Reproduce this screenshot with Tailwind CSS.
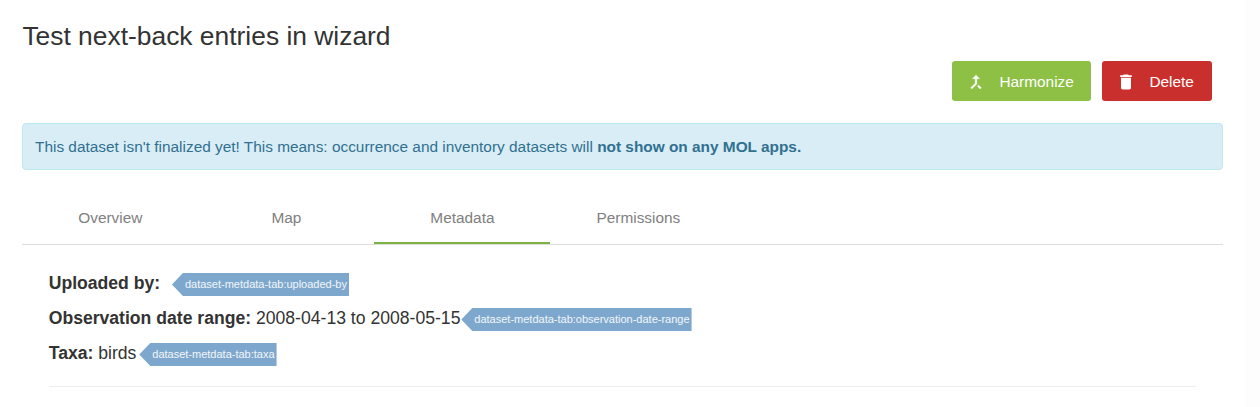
<!DOCTYPE html>
<html lang="en">
<head>
<meta charset="utf-8">
<title>Test next-back entries in wizard</title>
<script src="https://cdn.jsdelivr.net/npm/@tailwindcss/browser@4"></script>
</head>
<body class="flex h-[407px] overflow-hidden bg-white font-['Liberation_Sans',Arial,sans-serif] text-[#333333]">
<main class="w-[1245px] shrink-0 pl-[22px] pr-[22px]">
  <h1 class="h-[61px] pt-[18px] pl-[0.4px] text-[26.4px] leading-[36px] whitespace-nowrap">Test next-back entries in wizard</h1>
  <div class="flex justify-end gap-[11px] pr-[11px]">
    <button class="flex h-10 w-[139px] items-center rounded-[3px] bg-[#8dc045] pl-[14px] text-[15.4px] leading-[22px] text-white">
      <svg class="mt-px mr-[13.4px] size-5" viewBox="0 0 24 24" fill="currentColor" stroke="currentColor" stroke-width="0.4"><path d="M17 20.41L18.41 19 15 15.59 13.59 17 17 20.41zM7.5 8H11v5.59L5.59 19 7 20.41l6-6V8h3.5L12 3.5 7.5 8z"/></svg>
      <span class="pt-px">Harmonize</span>
    </button>
    <button class="flex h-10 w-[110px] items-center rounded-[3px] bg-[#c92f2c] pl-[14.4px] text-[15.4px] leading-[22px] text-white">
      <svg class="mt-[1.5px] mr-[13px] size-5" viewBox="0 0 24 24" fill="currentColor"><path d="M6 19c0 1.1.9 2 2 2h8c1.1 0 2-.9 2-2V7H6v12z"/><path d="M19 4h-3.5l-1-1h-5l-1 1H5v2h14V4z"/></svg>
      <span class="pt-px">Delete</span>
    </button>
  </div>
  <div class="mt-[22px] h-[47px] rounded-[4px] border border-[#bce8f1] bg-[#d9edf7] pl-3 text-[15.4px] leading-[45px] text-[#31708f]">This dataset isn't finalized yet! This means: occurrence and inventory datasets will <b>not show on any MOL apps.</b></div>
  <nav class="mt-[21px] flex h-[54px] border-b border-[#dddddd] text-center text-[15.4px] leading-[53px] text-[#808080]">
    <a class="w-44 pl-[0.6px]">Overview</a>
    <a class="w-44 pl-[0.8px]">Map</a>
    <a class="w-44 border-b-2 border-[#7cb342] pl-[0.8px]">Metadata</a>
    <a class="w-44 pl-[0.8px]">Permissions</a>
  </nav>
  <section class="mr-[27px] ml-[27px] h-[142px] border-b border-[#eeeeee] pt-[21px] text-[17.6px]">
    <div class="flex h-[35px] leading-[35px]"><b class="-ml-[0.3px]">Uploaded by:</b><span class="mt-[7px] ml-[11.8px] h-[23px] bg-[#7da7cc] pr-0.5 pl-[13px] text-[11px] leading-[23px] text-white/90 [clip-path:polygon(11px_0,100%_0,100%_100%,11px_100%,0_50%)]">dataset-metdata-tab:uploaded-by</span></div>
    <div class="flex h-[35px] leading-[35px]"><p class="-ml-[0.3px]"><b>Observation date range:</b> 2008-04-13 to 2008-05-15</p><span class="mt-[7px] ml-[0.9px] h-[23px] bg-[#7da7cc] pr-0.5 pl-[13px] text-[11px] leading-[23px] text-white/90 [clip-path:polygon(11px_0,100%_0,100%_100%,11px_100%,0_50%)]">dataset-metdata-tab:observation-date-range</span></div>
    <div class="flex h-[35px] leading-[35px]"><p class="-ml-[0.3px]"><b>Taxa:</b> birds</p><span class="mt-[7px] ml-[2.9px] h-[23px] bg-[#7da7cc] pr-0.5 pl-[13px] text-[11px] leading-[23px] text-white/90 [clip-path:polygon(11px_0,100%_0,100%_100%,11px_100%,0_50%)]">dataset-metdata-tab:taxa</span></div>
  </section>
</main>
<aside class="grow bg-[#fdfdfd]"></aside>
</body>
</html>
